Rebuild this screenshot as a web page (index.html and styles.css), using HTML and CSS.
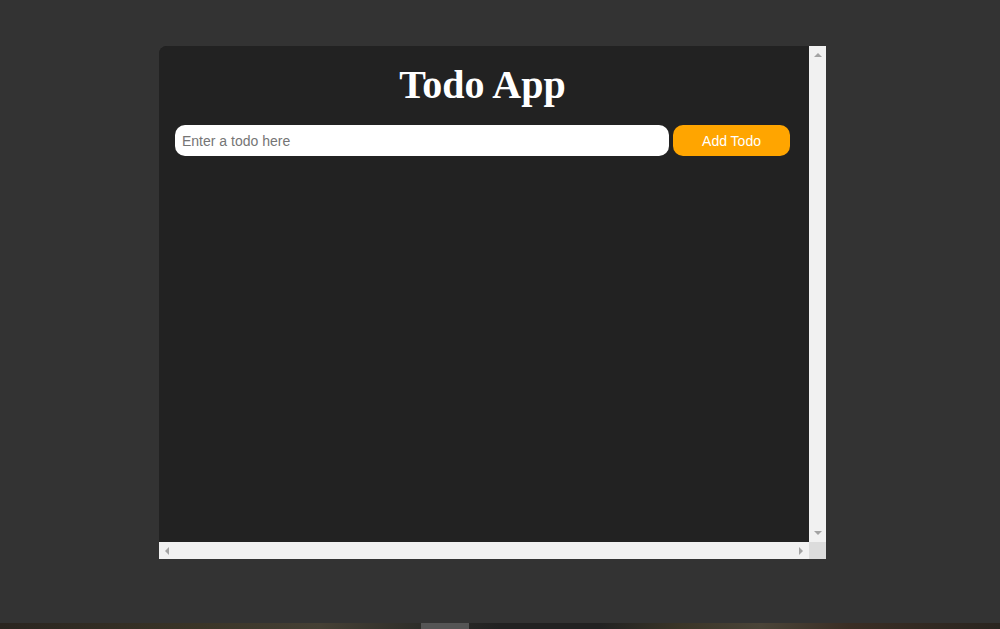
FILE: index.html
```html
<!DOCTYPE html>
<html lang="en">
<head>
<meta charset="utf-8">
<title>Todo App</title>
<link rel="stylesheet" href="styles.css">
</head>
<body>
<div class="stage">
  <div class="window">
    <div class="viewport">
      <h1 class="title">Todo App</h1>
      <form class="todo-form">
        <input class="todo-input" type="text" placeholder="Enter a todo here">
        <button class="add-btn" type="button">Add Todo</button>
      </form>
    </div>
    <div class="vscroll">
      <span class="arrow arrow-up"></span>
      <span class="arrow arrow-down"></span>
    </div>
    <div class="hscroll">
      <span class="arrow arrow-left"></span>
      <span class="arrow arrow-right"></span>
    </div>
    <div class="corner"></div>
  </div>
</div>
<div class="taskbar"><span class="task-item"></span></div>
</body>
</html>
```

FILE: styles.css
```css
* { box-sizing: border-box; }
html, body {
  margin: 0;
  padding: 0;
  height: 100%;
  background: #333333;
  overflow: hidden;
}
body {
  display: flex;
  flex-direction: column;
  font-family: "Liberation Sans", Arial, sans-serif;
}
.stage {
  flex: 1;
  padding: 46px 0 0 159px;
}
.window {
  width: 667px;
  height: 513px;
  display: grid;
  grid-template-columns: 650px 17px;
  grid-template-rows: 496px 17px;
  border-radius: 8px 0 0 0;
  overflow: hidden;
  background: #222222;
}
.viewport {
  background: #222222;
  padding: 16px 19px 0 16px;
}
.title {
  margin: 0 0 18px;
  font-family: "Liberation Serif", "Times New Roman", serif;
  font-weight: bold;
  font-size: 40px;
  line-height: 45px;
  color: #ffffff;
  text-align: center;
}
.todo-form {
  display: flex;
  gap: 4px;
  height: 31px;
}
.todo-input {
  flex: 1;
  border: none;
  border-radius: 10px;
  background: #ffffff;
  padding: 0 7px;
  font-family: "Liberation Sans", Arial, sans-serif;
  font-size: 14px;
  color: #222;
  outline: none;
}
.todo-input::placeholder { color: #757575; }
.add-btn {
  width: 117px;
  border: none;
  border-radius: 10px;
  background: #ffa500;
  color: #ffffff;
  font-family: "Liberation Sans", Arial, sans-serif;
  font-size: 14px;
  padding: 0;
}
.vscroll {
  background: #f1f1f1;
  display: flex;
  flex-direction: column;
  justify-content: space-between;
  align-items: center;
  padding: 7px 0 7px;
}
.hscroll {
  background: #f1f1f1;
  display: flex;
  justify-content: space-between;
  align-items: center;
  padding: 0 6px 0 6px;
}
.corner { background: #dcdcdc; }
.arrow { width: 0; height: 0; display: block; }
.arrow-up {
  border-left: 4px solid transparent;
  border-right: 4px solid transparent;
  border-bottom: 4px solid #a3a3a3;
}
.arrow-down {
  border-left: 4px solid transparent;
  border-right: 4px solid transparent;
  border-top: 4px solid #a3a3a3;
}
.arrow-left {
  border-top: 4px solid transparent;
  border-bottom: 4px solid transparent;
  border-right: 4px solid #a3a3a3;
}
.arrow-right {
  border-top: 4px solid transparent;
  border-bottom: 4px solid transparent;
  border-left: 4px solid #a3a3a3;
}
.taskbar {
  height: 6px;
  flex: none;
  background: linear-gradient(90deg, #2a2520 0%, #3a3528 20%, #454035 32%, #2e2e2a 42%, #222222 50%, #222222 60%, #3a3528 68%, #4a4438 76%, #3a2e25 85%, #2a2520 100%);
  position: relative;
}
.task-item {
  position: absolute;
  left: 421px;
  top: 0;
  width: 48px;
  height: 6px;
  background: #555555;
}
```
